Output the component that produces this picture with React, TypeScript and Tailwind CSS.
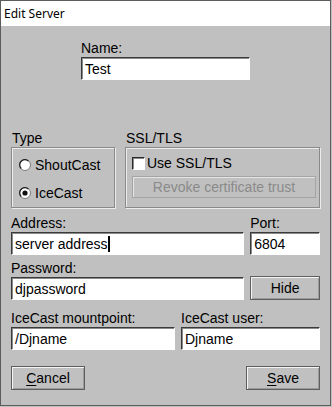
import React from "react";

const input =
  "h-[23px] bg-white border border-t-[#3a3a3a] border-l-[#3a3a3a] border-b-white border-r-white shadow-[inset_1px_1px_0_#8a8a8a] px-[3px] text-[14px] leading-[20px] text-black flex items-center";

const button =
  "h-[24px] flex items-center justify-center text-[14px] text-black border border-[#5e5e5e] shadow-[inset_1px_1px_0_#f4f4f4,inset_-1px_-1px_0_#9a9a9a] bg-[#c0c0c0]";

const groupBox =
  "h-[61px] border border-[#8a8a8a] shadow-[inset_1px_1px_0_#ececec,1px_1px_0_#ececec]";

function Radio({ checked }: { checked?: boolean }) {
  return (
    <svg width="12" height="12" viewBox="0 0 12 12" className="shrink-0">
      <circle cx="6" cy="6" r="5.5" fill="#fff" stroke="#7a7a7a" />
      <path d="M2.2 9.5 A5 5 0 0 1 9.5 2.2" fill="none" stroke="#1a1a1a" strokeWidth="1.2" />
      {checked && <circle cx="6" cy="6" r="2.6" fill="#111" />}
    </svg>
  );
}

function Field({ label, value, className, caret }: { label: string; value: string; className?: string; caret?: boolean }) {
  return (
    <div className={"flex flex-col gap-[1px] " + (className ?? "")}>
      <span className="text-[14px] leading-[16px] text-black">{label}</span>
      <div className={input}>
        {value}
        {caret && <span className="inline-block w-[2px] h-[16px] bg-black" />}
      </div>
    </div>
  );
}

export default function App() {
  return (
    <div className="w-[332px] h-[407px] bg-[#c0c0c0] font-['Liberation_Sans',Arial,sans-serif] overflow-hidden">
      <div className="w-[331px] h-[406px] border border-[#5c5c5c] flex flex-col">
        {/* Title bar */}
        <div className="h-[25px] bg-white flex items-center px-[3px] text-[12px] text-black font-['Noto_Sans',sans-serif]">
          Edit Server
        </div>

        {/* Body */}
        <div className="flex-1 flex flex-col pl-[10px] pr-[10px] text-black">
          <div className="mt-[14px] ml-[70px] w-[169px]">
            <Field label="Name:" value="Test" />
          </div>

          <div className="mt-[50px] flex gap-[10px]">
            <div className="w-[105px] flex flex-col gap-[1px]">
              <span className="text-[14px] leading-[16px] pl-[1px]">Type</span>
              <div className={groupBox + " flex flex-col pl-[7px] pt-[9px] gap-[12px]"}>
                <div className="flex items-center gap-[4px] h-[16px] text-[14px]">
                  <Radio />
                  ShoutCast
                </div>
                <div className="flex items-center gap-[4px] h-[16px] text-[14px]">
                  <Radio checked />
                  IceCast
                </div>
              </div>
            </div>
            <div className="w-[195px] flex flex-col gap-[1px]">
              <span className="text-[14px] leading-[16px] pl-[1px]">SSL/TLS</span>
              <div className={groupBox + " flex flex-col px-[6px] pt-[9px]"}>
                <div className="flex items-center gap-[2px] h-[13px] text-[14px]">
                  <span className="w-[13px] h-[13px] bg-white border border-t-[#2a2a2a] border-l-[#2a2a2a] border-b-white border-r-white shadow-[inset_1px_1px_0_#8a8a8a]" />
                  Use SSL/TLS
                </div>
                <div className="mt-[6px] w-[184px] h-[22px] flex items-center justify-center text-[14px] text-[#8a8a8a] border border-[#a4a4a4] shadow-[inset_1px_1px_0_#e6e6e6]">
                  Revoke certificate trust
                </div>
              </div>
            </div>
          </div>

          <div className="mt-[7px] flex gap-[6px]">
            <Field label="Address:" value="server address" className="w-[234px]" caret />
            <Field label="Port:" value="6804" className="w-[70px]" />
          </div>

          <div className="mt-[5px] flex gap-[6px] items-end">
            <Field label="Password:" value="djpassword" className="w-[234px]" />
            <div className={button + " w-[70px]"}>Hide</div>
          </div>

          <div className="mt-[10px] flex gap-[6px]">
            <Field label="IceCast mountpoint:" value="/Djname" className="w-[164px]" />
            <Field label="IceCast user:" value="Djname" className="w-[139px]" />
          </div>

          <div className="mt-[16px] flex justify-between">
            <div className={button + " w-[74px]"}>
              <span>
                <span className="underline underline-offset-2">C</span>ancel
              </span>
            </div>
            <div className={button + " w-[74px]"}>
              <span>
                <span className="underline underline-offset-2">S</span>ave
              </span>
            </div>
          </div>
        </div>
      </div>
    </div>
  );
}
